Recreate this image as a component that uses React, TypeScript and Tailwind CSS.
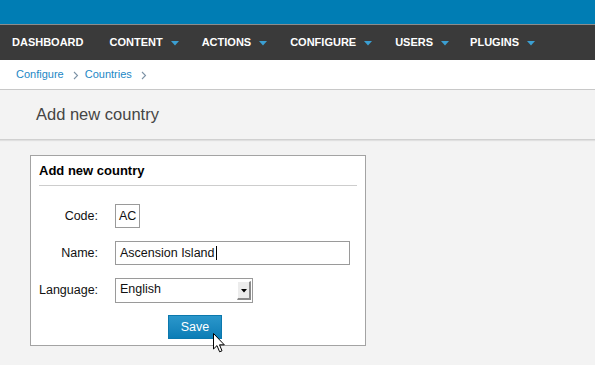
import React from "react";

const Caret = () => (
  <svg width="8" height="5" viewBox="0 0 8 5" className="ml-[8px] mt-[2px]">
    <path d="M0 0 L8 0 L4 4.5 Z" fill="#3b9fd2" />
  </svg>
);

const Chevron = () => (
  <svg width="6" height="9" viewBox="0 0 6 9" className="ml-[9px] mr-[6px] mt-[2px]">
    <path d="M1 1 L4.5 4.5 L1 8" fill="none" stroke="#7d93a6" strokeWidth="1.1" />
  </svg>
);

function NavItem({ label, caret, ml }: { label: string; caret?: boolean; ml: string }) {
  return (
    <div className={`flex items-center ${ml}`}>
      <span className="text-[11px] font-bold text-white">{label}</span>
      {caret && <Caret />}
    </div>
  );
}

export default function App() {
  return (
    <div className="relative w-[595px] h-[365px] overflow-hidden bg-[#f3f3f3] font-['Liberation_Sans',Arial,sans-serif]">
      <div className="h-[24px] bg-[#007db4]" />
      <div className="h-px bg-[#8c8c8c]" />
      <nav className="h-[35px] bg-[#3a3a3a] flex items-center pb-[1px]">
        <NavItem label="DASHBOARD" ml="ml-[12px]" />
        <NavItem label="CONTENT" caret ml="ml-[26px]" />
        <NavItem label="ACTIONS" caret ml="ml-[23px]" />
        <NavItem label="CONFIGURE" caret ml="ml-[23px]" />
        <NavItem label="USERS" caret ml="ml-[23px]" />
        <NavItem label="PLUGINS" caret ml="ml-[21px]" />
      </nav>
      <div className="h-[30px] bg-white border-b border-[#c8c8c8] flex items-center pl-[16px] text-[11px] text-[#1c87c5]">
        <span>Configure</span>
        <Chevron />
        <span>Countries</span>
        <Chevron />
      </div>
      <div className="h-[50px] border-b border-[#d0d0d0] shadow-[0_1px_1px_rgba(0,0,0,0.08)] flex items-center pl-[36px]">
        <span className="text-[16.5px] text-[#454545]">Add new country</span>
      </div>
      <div className="pt-[15px] pl-[30px]">
        <div className="w-[336px] h-[191px] border border-[#a3a3a3] bg-white px-[8px]">
          <div className="pt-[6px] pb-[6px] border-b border-[#cdcdcd] text-[13px] leading-[17px] font-bold text-black">
            Add new country
          </div>
          <div className="pt-[18px] flex flex-col gap-[13px] text-[12.5px] leading-[16px] text-[#111]">
            <div className="flex items-center h-[24px]">
              <div className="w-[59px] text-right">Code:</div>
              <div className="ml-[17px] w-[25px] h-[24px] border border-[#9a9a9a] flex items-center pl-[3px]">AC</div>
            </div>
            <div className="flex items-center h-[24px]">
              <div className="w-[59px] text-right">Name:</div>
              <div className="ml-[17px] w-[235px] h-[24px] border border-[#9a9a9a] flex items-center pl-[4px]">
                <span>Ascension Island</span>
                <span className="inline-block w-px h-[14px] bg-black ml-px" />
              </div>
            </div>
            <div className="flex items-center h-[24px]">
              <div className="w-[59px] text-right">Language:</div>
              <div className="ml-[17px] w-[138px] h-[25px] border border-[#9a9a9a] flex items-center justify-between pl-[4px] pr-[1px]">
                <span className="-mt-[2px]">English</span>
                <div className="w-[14px] h-[19px] bg-[#ececec] border-r-2 border-b-2 border-[#8a8a8a] border-t border-l border-t-white border-l-white flex items-center justify-center">
                  <svg width="6" height="4" viewBox="0 0 6 4" className="mt-[2px]">
                    <path d="M0 0 L6 0 L3 3.5 Z" fill="#000" />
                  </svg>
                </div>
              </div>
            </div>
            <div className="h-[24px] flex">
              <button className="ml-[129px] w-[54px] h-[24px] bg-gradient-to-b from-[#2a97cb] to-[#0a7db6] border border-[#0b78ad] text-white text-[12.5px]">
                Save
              </button>
            </div>
          </div>
        </div>
      </div>
      <svg className="absolute left-[213px] top-[333px]" width="14" height="21" viewBox="0 0 14 21">
        <path d="M0.5 0.5 L0.5 16 L4 12.6 L6.6 18.8 L9 17.8 L6.5 11.8 L11.3 11.8 Z" fill="#fff" stroke="#000" strokeWidth="1" strokeLinejoin="round" />
      </svg>
    </div>
  );
}
